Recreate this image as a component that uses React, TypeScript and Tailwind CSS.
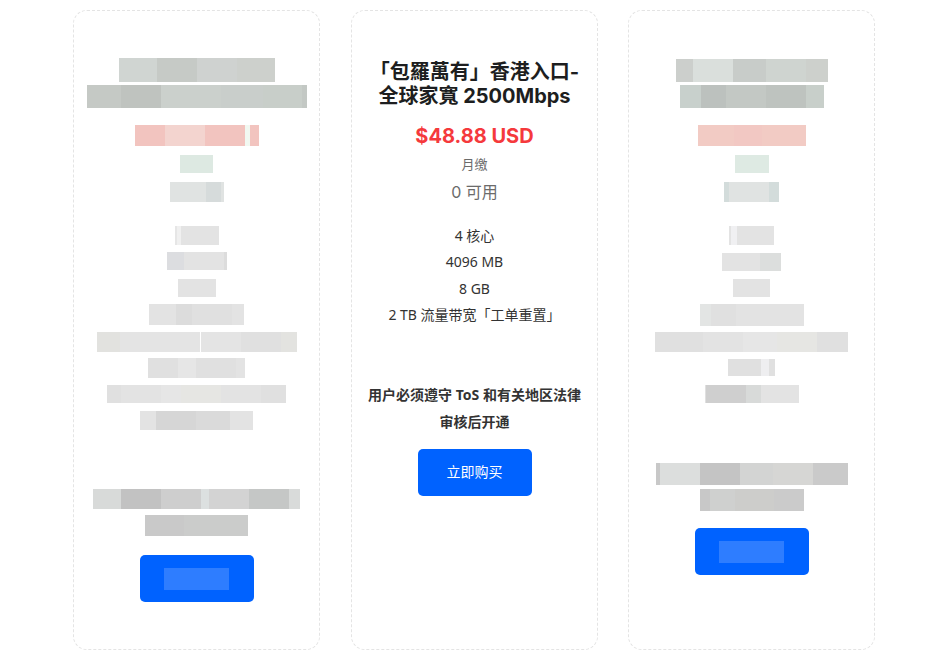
import type { ReactNode } from "react";

type Seg = [number, string];
type Row = { mt: number; h: number; segs: Seg[] };

// pixelated (blurred) plan cards on both sides
const leftRows: Row[] = [
  { mt: 47, h: 24, segs: [[38, "#d0d5d2"], [40, "#c6cac6"], [40, "#cfd2d0"], [38, "#cdd0cc"]] },
  { mt: 3, h: 23, segs: [[34, "#c5c9c5"], [40, "#bfc3bf"], [60, "#cbd0cc"], [42, "#c9cecb"], [39, "#c8cec9"], [5, "#c3c8c4"]] },
  { mt: 17, h: 21, segs: [[30, "#f2c4bf"], [40, "#f3d4cf"], [40, "#f2c4bf"], [5, "#f1f8f1"], [9, "#f2c4bf"]] },
  { mt: 9, h: 18, segs: [[33, "#dde9e2"]] },
  { mt: 9, h: 20, segs: [[36, "#e0e3e2"], [15, "#d6dbdb"], [3, "#e0e3e2"]] },
  { mt: 24, h: 19, segs: [[2, "#e6e6e6"], [4, "#f0f0f0"], [38, "#e3e3e3"]] },
  { mt: 7, h: 18, segs: [[17, "#dcdde0"], [40, "#e3e3e3"], [3, "#dcdcdc"]] },
  { mt: 9, h: 18, segs: [[38, "#e3e3e3"]] },
  { mt: 7, h: 21, segs: [[27, "#e3e3e3"], [16, "#dcdcdc"], [40, "#e0e0e0"], [12, "#e3e3e3"]] },
  { mt: 7, h: 20, segs: [[23, "#e2e2df"], [80, "#e4e4e4"], [1, "#ffffff"], [40, "#e4e4e4"], [40, "#e0e0e0"], [16, "#e3e3e0"]] },
  { mt: 6, h: 20, segs: [[30, "#e0e0e0"], [18, "#e6e6e6"], [40, "#e0e0e0"], [9, "#e3e3e3"]] },
  { mt: 7, h: 18, segs: [[14, "#e0e0e0"], [40, "#e3e3e3"], [20, "#e6e6e6"], [40, "#e6e6e3"], [40, "#e3e3e3"], [25, "#e0e0e0"]] },
  { mt: 8, h: 19, segs: [[16, "#e3e3e3"], [40, "#d6d6d6"], [34, "#dadada"], [23, "#e3e3e3"]] },
  { mt: 59, h: 20, segs: [[28, "#d8dad9"], [40, "#c2c2c2"], [40, "#cecece"], [8, "#dce0e0"], [40, "#d3d3d3"], [40, "#c5c7c6"], [11, "#d9dbda"]] },
  { mt: 6, h: 21, segs: [[39, "#c9c9c9"], [64, "#cbcccb"]] },
];

const rightRows: Row[] = [
  { mt: 48, h: 23, segs: [[17, "#cccfcc"], [40, "#dadfdc"], [33, "#c8ccc9"], [40, "#cfd4d0"], [22, "#cdd0cc"]] },
  { mt: 3, h: 23, segs: [[21, "#c8d0cc"], [25, "#bcc1be"], [40, "#c3c8c4"], [40, "#bec3bf"], [18, "#c8cfca"]] },
  { mt: 17, h: 21, segs: [[36, "#f2cbc4"], [28, "#f2c8c3"], [44, "#f2cbc4"]] },
  { mt: 9, h: 18, segs: [[34, "#deeae3"]] },
  { mt: 9, h: 20, segs: [[5, "#d3dcdb"], [40, "#e0e3e2"], [10, "#d3dcdb"]] },
  { mt: 24, h: 19, segs: [[2, "#e3e3e3"], [6, "#f0f0f2"], [37, "#e3e3e3"]] },
  { mt: 8, h: 18, segs: [[38, "#e3e3e3"], [21, "#dcdedd"]] },
  { mt: 8, h: 18, segs: [[37, "#e3e3e3"]] },
  { mt: 7, h: 22, segs: [[11, "#e3e5e4"], [25, "#e0e0e0"], [68, "#e3e3e3"]] },
  { mt: 6, h: 20, segs: [[48, "#e0e0e0"], [40, "#e3e3e3"], [34, "#e6e6e6"], [40, "#e6e6e3"], [31, "#e0e0e0"]] },
  { mt: 7, h: 17, segs: [[33, "#e0e0e0"], [8, "#eeeef0"], [6, "#e0e0e0"]] },
  { mt: 9, h: 18, segs: [[1, "#e0e0e0"], [40, "#cfcfcf"], [15, "#d8dad9"], [38, "#e3e3e3"]] },
  { mt: 60, h: 22, segs: [[4, "#c8c8c8"], [40, "#dcdedd"], [40, "#c4c4c4"], [33, "#d3d4d3"], [40, "#d6d6d4"], [35, "#cacaca"]] },
  { mt: 4, h: 22, segs: [[10, "#c8c8c8"], [25, "#cfd0cf"], [39, "#cdcdcb"], [30, "#cbcbcb"]] },
];

function Card({ children, className = "" }: { children: ReactNode; className?: string }) {
  return (
    <div
      className={
        "w-[247px] h-[640px] shrink-0 rounded-[14px] border border-dashed border-[#e4e4e4] bg-white flex flex-col items-center " +
        className
      }
    >
      {children}
    </div>
  );
}

function BlurredCard({ rows, btnMt, className }: { rows: Row[]; btnMt: number; className?: string }) {
  return (
    <Card className={className}>
      {rows.map((r, i) => (
        <div key={i} className="flex" style={{ marginTop: r.mt, height: r.h }}>
          {r.segs.map(([w, c], j) => (
            <div key={j} style={{ width: w, backgroundColor: c }} />
          ))}
        </div>
      ))}
      <div
        className="w-[114px] h-[47px] rounded-[5px] bg-[#0062ff] flex items-center justify-center"
        style={{ marginTop: btnMt }}
      >
        <div className="w-[65px] h-[22px] bg-[#2e7dff]" />
      </div>
    </Card>
  );
}

export default function App() {
  return (
    <div className="min-h-screen bg-white pt-[10px] pl-[73px] font-['Noto_Sans','Noto_Sans_CJK_SC',sans-serif]">
      <div className="flex">
        <BlurredCard rows={leftRows} btnMt={19} />

        <Card className="ml-[31px] mr-[30px]">
          <div className="mt-[49px] px-4 text-center text-[20px] leading-6 font-bold text-[#1d1e20] font-['Inter','Noto_Sans_CJK_SC',sans-serif]">
            「包羅萬有」香港入口-全球家寬 2500Mbps
          </div>
          <div className="mt-[14px] text-[20px] leading-7 font-bold text-[#f5393c] font-['Inter',sans-serif]">
            $48.88 USD
          </div>
          <div className="mt-1 text-[13px] leading-5 text-[#6b6b6b]">月缴</div>
          <div className="mt-[6px] text-base leading-6 text-[#6b6b6b] font-['Inter','Noto_Sans_CJK_SC',sans-serif]">
            0 可用
          </div>

          <ul className="mt-[19px] text-center text-sm leading-[26.4px] text-[#333]">
            <li>4 核心</li>
            <li>4096 MB</li>
            <li>8 GB</li>
            <li>2 TB 流量带宽「工单重置」</li>
          </ul>

          <div className="mt-[52px] text-center text-sm leading-[27px] font-bold text-[#333]">
            <p>用户必须遵守 ToS 和有关地区法律</p>
            <p>审核后开通</p>
          </div>

          <button className="mt-[14px] w-[114px] h-[47px] rounded-[5px] bg-[#0062ff] text-white text-sm">
            立即购买
          </button>
        </Card>

        <BlurredCard rows={rightRows} btnMt={17} />
      </div>
    </div>
  );
}
